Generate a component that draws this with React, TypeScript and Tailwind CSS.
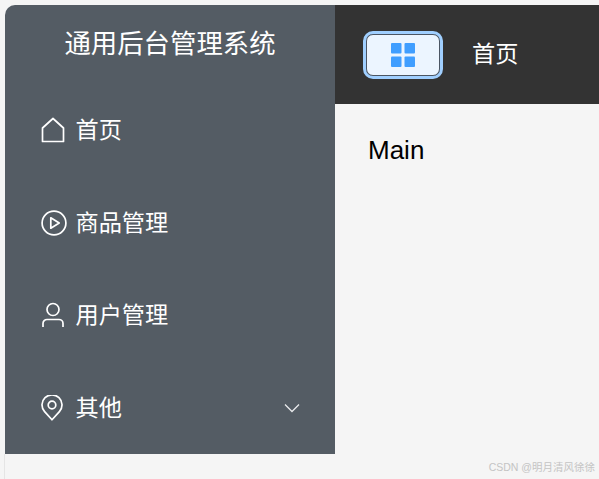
import React from 'react'

const cjk = { fontFamily: '"Liberation Sans", "Noto Sans CJK SC", sans-serif' }

function HomeIcon() {
  return (
    <svg width="24" height="26" viewBox="0 0 24 26" fill="none" stroke="white" strokeWidth="1.7">
      <path d="M1.5 24.5V11L12 1.5 22.5 11v13.5z" strokeLinejoin="round" />
    </svg>
  )
}

function PlayIcon() {
  return (
    <svg width="26" height="26" viewBox="0 0 26 26" fill="none" stroke="white" strokeWidth="1.7">
      <circle cx="13" cy="13" r="11.9" />
      <path d="M9.8 7.8v10.4l8.4-5.2z" strokeLinejoin="round" />
    </svg>
  )
}

function UserIcon() {
  return (
    <svg width="24" height="26" viewBox="0 0 24 26" fill="none" stroke="white" strokeWidth="1.7">
      <circle cx="12" cy="7.5" r="6" />
      <path d="M2 25v-3.5a4 4 0 0 1 4-4h12a4 4 0 0 1 4 4V25" />
    </svg>
  )
}

function PinIcon() {
  return (
    <svg width="22" height="26" viewBox="0 0 22 26" fill="none" stroke="white" strokeWidth="1.7">
      <path d="M11 24.8 3.6 16.6A10 10 0 1 1 18.4 16.6z" strokeLinejoin="round" />
      <circle cx="11" cy="10" r="3.8" />
    </svg>
  )
}

function MenuItem({ icon, label, arrow }: { icon: React.ReactNode; label: string; arrow?: boolean }) {
  return (
    <div className="flex h-[92px] items-center pl-[36px] pr-[35px] first:mb-px nth-[3]:mb-px">
      <div className="flex w-[34.5px] shrink-0 items-center">{icon}</div>
      <span className="text-[23.2px] leading-[24px] text-white">{label}</span>
      {arrow && (
        <svg className="ml-auto" width="16" height="10" viewBox="0 0 16 10" fill="none" stroke="#e8eaec" strokeWidth="1.3">
          <path d="M1 1.5 8 8.5l7-7" />
        </svg>
      )}
    </div>
  )
}

function GridIcon() {
  return (
    <svg width="26" height="26" viewBox="0 0 26 26" fill="#409eff">
      <rect x="1" y="1" width="10.5" height="10.5" rx="1" />
      <rect x="14.5" y="1" width="10.5" height="10.5" rx="1" />
      <rect x="1" y="14.5" width="10.5" height="10.5" rx="1" />
      <rect x="14.5" y="14.5" width="10.5" height="10.5" rx="1" />
    </svg>
  )
}

export default function App() {
  return (
    <div className="relative h-[479px] w-[599px] overflow-hidden bg-[#f5f5f5]" style={cjk}>
      <div className="flex h-[454px] pl-[5px] pt-[5px]">
        {/* sidebar */}
        <aside className="h-[449px] w-[330px] shrink-0 rounded-tl-[10px] bg-[#545c64]">
          <div className="flex h-[80px] justify-center whitespace-nowrap pt-[26px] text-[26.4px] leading-none text-white">通用后台管理系统</div>
          <div className="-mt-px">
            <MenuItem icon={<HomeIcon />} label="首页" />
            <MenuItem icon={<PlayIcon />} label="商品管理" />
            <MenuItem icon={<UserIcon />} label="用户管理" />
            <MenuItem icon={<PinIcon />} label="其他" arrow />
          </div>
        </aside>
        <div className="flex min-w-0 flex-1 flex-col">
          <header className="flex h-[99px] items-center bg-[#333333] pl-[31px]">
            <button className="box-content flex h-[40px] w-[72px] items-center justify-center rounded-[7px] border border-[#4b5563] bg-[#ecf5ff] outline-[3px] outline-[#a0cfff]">
              <GridIcon />
            </button>
            <span className="ml-[32px] text-[23.2px] leading-none text-white">首页</span>
          </header>
          <main className="pl-[33px] pt-[31px] text-[26px] leading-[30px] text-black">Main</main>
        </div>
      </div>
      <div className="h-[25px] w-[5px] border-r border-[#e5e5e5]" />
      <span className="absolute bottom-[5px] right-[4px] text-[10.5px] leading-[13px] text-[#c4c4c4]">CSDN @明月清风徐徐</span>
    </div>
  )
}
